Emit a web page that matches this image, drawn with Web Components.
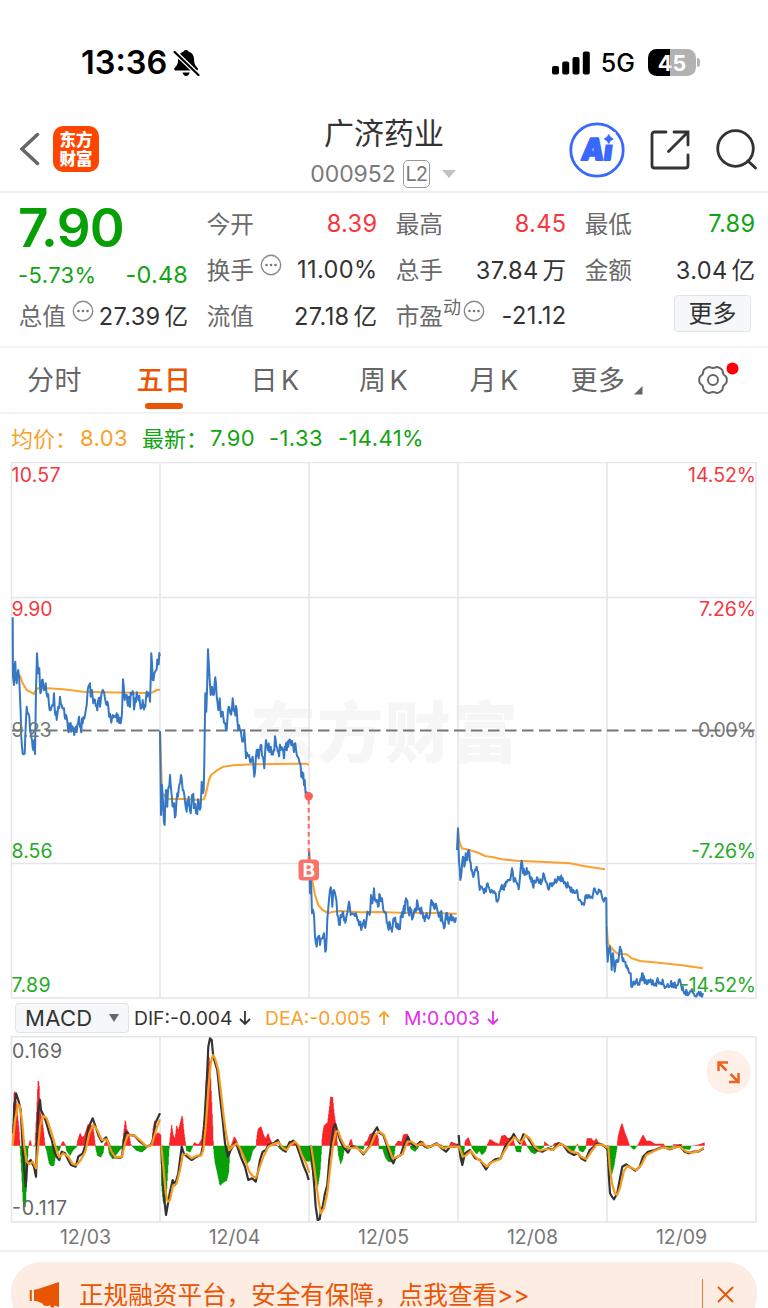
<!DOCTYPE html>
<html lang="zh-CN">
<head>
<meta charset="utf-8">
<title>广济药业 000952</title>
<style>
html, body {
    margin: 0;
    padding: 0;
    background: #fff;
}

body {
    width: 768px;
    height: 1308px;
    overflow: hidden;
    font-family: Inter, "Noto Sans CJK SC", sans-serif;
    color: #333;
}
</style>
</head>
<body>
<stock-app></stock-app>

<script>
const define = (name, html, setup) => {
    customElements.define(name, class extends HTMLElement {
        constructor() {
            super();
            this.attachShadow({ mode: "open" });
            this.shadowRoot.innerHTML = html;
        }
        connectedCallback() {
            if (setup) setup(this, this.shadowRoot);
        }
    });
};

define("status-bar", `
<style>
:host {
    display: flex;
    align-items: center;
    height: 100px;
    padding: 25px 68px 0 81px;
    box-sizing: border-box;
    color: #000;
}
.time { font-size: 32.5px; font-weight: 600; letter-spacing: 0; line-height: 40px; }
.bell { margin-left: 6px; margin-top: 1px; }
.signal { margin-left: auto; }
.net { font-size: 25px; font-weight: 500; letter-spacing: 0; margin: 0 13px 0 11px; }
.battery {
    width: 48px;
    height: 27px;
    border-radius: 8.5px;
    background: linear-gradient(90deg, #000 22px, #b2b2b2 22px);
    color: #fff;
    font-size: 21.5px;
    font-weight: 700;
    line-height: 28px;
    text-align: center;
}
.cap { width: 3px; height: 9px; margin-left: 1px; border-radius: 0 4px 4px 0; background: #b2b2b2; }
svg { display: block; }
</style>
<span class="time">13:36</span>
<svg class="bell" width="27" height="28" viewBox="0 0 27 28">
    <path d="M13 1c-1.700 0-2.300 1-2.700 1.800C6.500 4 5.300 7 5.200 10c-.1 4.500-1.200 6.500-3.600 9-.8.900-.6 2.600 1 2.600h21c1.600 0 1.800-1.700 1-2.600-2.400-2.500-3.500-4.500-3.600-9-.1-3-1.300-6-5.200-7.200C15.300 2 14.700 1 13 1z"/>
    <path d="M9.500 23.500h7.200c-.5 2-1.800 3.400-3.600 3.400s-3.100-1.400-3.600-3.400z"/>
    <path d="M1 2.200L25.500 26" stroke="#fff" stroke-width="4.600"/>
    <path d="M1.600 3L25.500 26" stroke="#000" stroke-width="2.200" stroke-linecap="round"/>
</svg>
<svg class="signal" width="38" height="24" viewBox="0 0 38 24">
    <rect x="0" y="15" width="7" height="8.500" rx="2"/>
    <rect x="10.200" y="10.500" width="7" height="13" rx="2"/>
    <rect x="20.500" y="6" width="7" height="17.500" rx="2"/>
    <rect x="30.800" y="0.500" width="7" height="23" rx="2"/>
</svg>
<span class="net">5G</span>
<div class="battery">45</div>
<div class="cap"></div>
`);

define("nav-bar", `
<style>
:host {
    display: grid;
    grid-template-columns: 1fr 160px 1fr;
    height: 93px;
    padding: 0 11px 0 18px;
    box-sizing: border-box;
    border-bottom: 2px solid #efefef;
}
.left { display: flex; align-items: center; gap: 12px; padding-top: 7px; }
.right { display: flex; align-items: center; justify-content: flex-end; padding-top: 8px; }
.logo {
    width: 46px;
    height: 46px;
    border-radius: 10px;
    background: #ff4600;
    color: #fff;
    font: 900 16.5px/19px "Noto Sans CJK SC", sans-serif;
    text-align: center;
    padding-top: 4px;
    box-sizing: border-box;
}
.title { text-align: center; margin-left: -9px; }
.name { font-size: 30px; line-height: 36px; margin: 15px 0 0 2px; }
.code {
    display: flex;
    align-items: center;
    justify-content: center;
    height: 30px;
    margin-top: 8px;
    font-size: 23px;
    letter-spacing: -0.05px;
    color: #7a7a7a;
}
.level {
    width: 25px;
    height: 26px;
    margin: 0 12px 0 7px;
    border: 1.500px solid #999;
    border-radius: 5px;
    font-size: 20px;
    line-height: 27px;
    letter-spacing: -1px;
}
.drop { border: 7px solid transparent; border-top: 8px solid #c2c2c2; border-bottom: 0; }
svg { display: block; fill: none; stroke: #333; }
</style>
<div class="left">
    <svg width="23" height="34" viewBox="0 0 23 34"><path d="M19.500 2.500L4 17l15.500 14.500" stroke="#666" stroke-width="3.500" stroke-linecap="round"/></svg>
    <div class="logo">东方<br>财富</div>
</div>
<div class="title">
    <div class="name">广济药业</div>
    <div class="code">000952<span class="level">L2</span><span class="drop"></span></div>
</div>
<div class="right">
    <svg width="56" height="56" viewBox="0 0 56 56">
        <circle cx="28" cy="28" r="26.200" stroke="#3968ff" stroke-width="2.800"/>
        <g transform="translate(11.500 38) skewX(-7)">
            <text font-size="30" font-weight="900" fill="#3968ff" stroke="#3968ff" stroke-width="1.800" stroke-linejoin="round" textLength="31" lengthAdjust="spacingAndGlyphs">Ai</text>
        </g>
        <path d="M34.500 10h12v12.500h-12z" fill="#fff" stroke="none"/>
        <path d="M39.700 12.500q1.300 3.200 4.500 4.500-3.200 1.300-4.500 4.500-1.300-3.200-4.500-4.500 3.200-1.300 4.500-4.500z" fill="#3968ff" stroke="#3968ff" stroke-width="0.800"/>
    </svg>
    <svg width="42" height="42" viewBox="0 0 42 42" stroke-width="2.800" stroke-linecap="round" style="margin-left:24px">
        <path d="M17 3H5.500Q3 3 3 5.500v31Q3 39 5.500 39h31q2.500 0 2.500-2.500V26M25 3h14v13M38.500 3.500L19.500 22.500"/>
    </svg>
    <svg width="42" height="42" viewBox="0 0 42 42" stroke-width="2.800" stroke-linecap="round" style="margin-left:24px">
        <circle cx="20.500" cy="19.500" r="17.800"/><path d="M33 32l7.500 7"/>
    </svg>
</div>
`);

// label on the left, value on the right, optional info dot between them
define("quote-cell", `
<style>
:host { display: flex; align-items: center; height: 46px; font-size: 23.600px; }
.label { color: #6a6a6a; white-space: nowrap; display: flex; align-items: center; padding-left: 0.700px; }
.value { margin: 0 -0.500px 0 auto; white-space: nowrap; letter-spacing: 0.35px; word-spacing: -3px; }
:host([tone="up"]) .value { color: #f8363c; }
:host([tone="down"]) .value { color: #12a412; }
.info { display: none; margin: -9px 0 0 6px; }
:host([info]) .info { display: block; }
:host([mark]) .info { margin-left: 2px; }
.mark { font-size: 18px; line-height: 20px; margin-top: -15px; }
.mark:empty { display: none; }
</style>
<span class="label"><slot name="label"></slot><span class="mark"></span>
<svg class="info" width="22" height="22" viewBox="0 0 22 22">
    <circle cx="11" cy="11" r="9.700" fill="none" stroke="#8a8a8a" stroke-width="1.400"/>
    <circle cx="6.500" cy="11" r="1.300" fill="#777"/><circle cx="11" cy="11" r="1.300" fill="#777"/><circle cx="15.500" cy="11" r="1.300" fill="#777"/>
</svg></span>
<span class="value"><slot></slot></span>
`, (host, root) => {
    root.querySelector(".mark").textContent = host.getAttribute("mark") || "";
});

define("quote-panel", `
<style>
:host {
    display: grid;
    grid-template-columns: 170px 171px 171px 171px;
    grid-template-rows: 46px 46px 46px;
    column-gap: 18px;
    height: 155px;
    padding: 7px 12px 0 18px;
    box-sizing: border-box;
    border-bottom: 2px solid #f3f3f3;
}
.price { font-size: 53px; font-weight: 600; line-height: 57px; letter-spacing: -0.8px; color: #06a006; }
.change { display: flex; justify-content: space-between; align-items: center; padding-top: 11px; height: 46px; box-sizing: border-box; font-size: 23.500px; letter-spacing: 0.2px; color: #12a412; }
.change span:first-child { font-size: 22px; letter-spacing: 0.4px; }
.more {
    justify-self: end;
    align-self: center;
    width: 75px;
    height: 35px;
    margin: -3px 4px 0 0;
    border: 1.500px solid #e1e4ea;
    border-radius: 4px;
    background: #f6f7f9;
    font-size: 24px;
    line-height: 35px;
    text-align: center;
}
</style>
<div class="price">7.90</div>
<quote-cell tone="up"><span slot="label">今开</span>8.39</quote-cell>
<quote-cell tone="up"><span slot="label">最高</span>8.45</quote-cell>
<quote-cell tone="down"><span slot="label">最低</span>7.89</quote-cell>
<div class="change"><span>-5.73%</span><span>-0.48</span></div>
<quote-cell info><span slot="label">换手</span>11.00%</quote-cell>
<quote-cell><span slot="label">总手</span>37.84 万</quote-cell>
<quote-cell><span slot="label">金额</span>3.04 亿</quote-cell>
<quote-cell info><span slot="label">总值</span>27.39 亿</quote-cell>
<quote-cell><span slot="label">流值</span>27.18 亿</quote-cell>
<quote-cell info mark="动"><span slot="label">市盈</span>-21.12</quote-cell>
<div class="more">更多</div>
`);

define("period-tabs", `
<style>
:host {
    display: grid;
    grid-template-columns: 109px 110px 112px 105px 116px 91px 1fr;
    height: 66px;
    box-sizing: border-box;
    border-bottom: 2px solid #f1f1f1;
    font-size: 27px;
    color: #666;
}
.tab { display: flex; flex-direction: column; align-items: center; padding-top: 13px; white-space: pre; line-height: 40px; letter-spacing: 0.5px; }
.tab.on { color: #ea5504; font-weight: 500; }
.tab.on::after { content: ""; width: 38px; height: 6px; margin-top: 2px; border-radius: 3px; background: #ea5504; }
.k { letter-spacing: 3.500px; padding-left: 3px; }
.more { flex-direction: row; align-items: flex-start; justify-content: center; padding-left: 18px; }
.more svg { margin: 25px 0 0 8px; }
.gear { display: block; margin: 13px 0 0 52px; }
</style>
<div class="tab">分时</div>
<div class="tab on">五日</div>
<div class="tab k">日K</div>
<div class="tab k">周K</div>
<div class="tab k">月K</div>
<div class="tab more">更多<svg width="9" height="9" viewBox="0 0 9 9"><path d="M8.500 0v8.500H0z" fill="#666"/></svg></div>
<svg class="gear" width="46" height="38" viewBox="0 0 46 38">
    <path class="rim" fill="none" stroke="#666" stroke-width="2"/>
    <circle cx="18" cy="19" r="5" fill="none" stroke="#666" stroke-width="2"/>
    <circle cx="37.500" cy="7.500" r="6" fill="#f00"/>
</svg>
`, (host, root) => {
    // six soft lobes
    const points = [];
    for (let a = 0; a < 360; a += 4) {
        const t = a * Math.PI / 180;
        const r = 13.1 + 0.95 * Math.cos(6 * t) - 0.25 * Math.cos(12 * t);
        points.push((18 + r * Math.cos(t)).toFixed(2) + " " + (19 + r * Math.sin(t)).toFixed(2));
    }
    root.querySelector(".rim").setAttribute("d", "M" + points.join("L") + "Z");
});

define("price-legend", `
<style>
:host {
    display: grid;
    grid-template-columns: 69px 62px 68px 59px 69px auto;
    align-items: center;
    justify-content: start;
    height: 48px;
    padding-left: 11px;
    font-size: 22px;
    letter-spacing: 0.4px;
    white-space: nowrap;
    color: #12a412;
}
.avg { color: #fb9f2a; }
.name { letter-spacing: 0; margin-top: -3px; }
</style>
<span class="avg name">均价：</span><span class="avg">8.03</span>
<span class="name">最新：</span><span>7.90</span><span>-1.33</span><span>-14.41%</span>
`);

// Series are lists of "x,y" in thirds of a pixel, counted from an origin.
const parse = (text, x, y) => text.trim().split(/\s+/).map(p => {
    const [a, b] = p.split(",").map(Number);
    return [x + a / 3, y + b / 3];
});
const toPath = pts => "M" + pts.map(p => p[0].toFixed(1) + " " + p[1].toFixed(1)).join("L");

let seed = 7;
const random = () => {
    seed = (seed * 16807) % 2147483647;
    return seed / 2147483647 - 0.5;
};

// fills the gaps between ticks with minute noise
const roughen = (pts, amount) => {
    const out = [];
    pts.forEach((p, i) => {
        out.push(p);
        const q = pts[i + 1];
        if (!q) return;
        const steps = Math.max(1, Math.round((q[0] - p[0]) / 0.7));
        for (let s = 1; s < steps; s++) {
            const k = s / steps;
            out.push([p[0] + (q[0] - p[0]) * k, p[1] + (q[1] - p[1]) * k + random() * amount]);
        }
    });
    return out;
};

const PRICE = [
    [0, 590, 15, `38,82 39,260 42,285 46,215 50,280 55,240 60,320 62,370 64,440 66,470 70,492 74,490 76,440 80,350 85,370 88,380
    92,430 96,450 100,480 103,450 105,492 108,300 111,190 115,250 118,235 121,310 126,270 132,300 137,280 142,320 147,345
    152,360 157,345 162,310 166,375 170,390 175,350 180,320 185,345 192,355 198,375 204,415 210,405 214,425 218,410 223,435
    228,410 234,400 237,380 242,415 248,400 255,375 260,345 263,300 268,285 274,310 280,340 285,330 290,350 296,325 300,350
    308,300 314,320 320,345 325,350 332,385 338,375 344,380 350,370 356,385 362,400 366,370 369,268 374,330 380,315 388,345
    396,310 404,345 412,315 420,340 428,330 434,345 442,320 450,335 454,190 458,270 463,250 468,240 474,210 480,197`],
    [150, 630, 13, `30,303 33,555 36,465 40,540 44,585 48,480 52,530 56,470 60,435 65,495 70,530 77,555 82,490 88,465 93,435
    98,480 105,515 110,545 116,500 122,550 128,495 134,530 140,548 146,515 152,530 155,455 161,480 163,400 166,190 169,245
    174,58 179,150 182,195 186,170 190,195 196,142 200,200 205,240 209,205 213,260 218,245 224,280 230,298 236,230 241,250
    248,205 254,240 260,240 265,300 272,300 277,335 283,300 288,385 293,375 300,395 308,380 313,440 320,360 326,385 332,345
    338,380 343,415 348,330 354,360 362,350 367,365 377,330 385,365 392,360 402,385 408,340 415,350 422,335 430,350 436,340
    443,380 449,400 454,440 460,430 466,480 472,490`],
    [300, 780, 12, `27,215 30,340 33,300 36,400 42,405 45,470 50,500 55,470 60,495 65,475 72,460 76,515 80,470 84,395 88,350 92,322
    97,380 102,330 107,350 112,405 117,435 122,405 128,395 134,415 140,405 147,365 152,405 160,400 168,400 175,420 181,425
    186,440 192,420 198,430 204,400 209,405 213,345 217,370 222,325 228,365 234,380 240,345 246,355 252,395 258,400 264,440
    270,430 276,455 282,415 290,430 298,445 304,410 310,390 314,400 318,355 324,390 332,395 340,410 347,395 353,370 358,385
    366,400 372,410 380,400 388,410 396,365 402,385 410,380 418,405 426,410 432,445 438,400 444,420 452,405 460,412 468,412`],
    [440, 810, 8, `51,120 54,55 57,155 61,210 65,180 69,140 73,170 77,130 82,150 86,120 90,155 96,180 102,195 108,180 114,185
    119,240 125,230 132,250 138,245 143,220 149,240 155,240 161,245 167,250 172,275 178,245 185,225 192,240 198,215 205,210
    211,210 216,175 221,215 228,215 236,238 241,190 245,152 249,190 256,185 264,185 272,200 278,225 285,215 295,212 305,215
    310,190 317,215 324,235 330,220 338,220 345,208 356,205 368,205 376,220 385,230 392,245 400,240 410,240 416,270 424,275
    432,285 438,255 446,262 455,260 464,235 470,250 480,245 487,265 499,267 500,400 503,455 507,415 511,420 515,480 519,430
    524,485 530,450 535,455 540,410 546,440 552,455 558,470 566,485 572,490 574,530 580,515 588,515 596,520 602,505 608,490
    614,520 625,510 640,520 655,515 670,520 685,530 700,520 712,525 720,510 726,540 735,545 745,555 752,545 760,550 768,560
    776,545 790,550`]
];

const AVERAGE = [
    [0, 590, `38,260 60,257 68,280 80,300 103,312 108,298 120,293 190,298 250,305 310,307 440,309 458,307 470,300 480,299`],
    [150, 630, `30,303 36,490 55,507 110,507 145,510 162,508 168,488 177,450 183,435 200,422 220,410 250,406 310,403 440,401 468,401 476,404`],
    [300, 780, `27,205 32,270 38,310 45,345 55,375 68,390 84,399 100,395 120,393 180,397 240,396 300,398 400,399 470,401`],
    [440, 810, `54,60 58,95 66,115 85,119 115,128 135,138 160,142 185,148 230,152 300,155 390,160 430,168 495,178`],
    [440, 810, `500,350 504,400 512,412 525,425 535,432 560,433 575,445 600,453 640,457 720,465 789,475`]
];

define("price-chart", `
<style>
:host { display: block; height: 537px; }
svg { display: block; }
.grid { fill: none; stroke: #e4e5ed; stroke-width: 1.500; }
.line { fill: none; stroke: #3577c2; stroke-width: 2; stroke-linejoin: round; }
.avg { fill: none; stroke: #faa22f; stroke-width: 2.100; stroke-linejoin: round; }
text { font-size: 19.500px; }
.up { fill: #f5383e; }
.down { fill: #25ab25; }
.flat { fill: #777; }
.end { text-anchor: end; }
.mark { font: 900 66px "Noto Sans CJK SC", sans-serif; fill: #f6f6f6; }
</style>
<svg width="768" height="537" viewBox="0 462 768 537">
    <text class="mark" x="250" y="757" textLength="268">东方财富</text>
    <path class="grid" d="M11.500 462.500H756V998H11.500zM11.500 597.500H756M11.500 863.500H756M160 462V998M309 462V998M458 462V998M607 462V998"/>
    <path d="M12 730.500H756" stroke="#777" stroke-width="2.100" stroke-dasharray="11.500 5.500" fill="none"/>
    <g class="series"></g>
    <path d="M308.700 800V860" stroke="#fb6a60" stroke-width="2" stroke-dasharray="4.500 3.500"/>
    <circle cx="308.700" cy="796.300" r="4.200" fill="#fb6259"/>
    <rect x="298.500" y="859.500" width="20.500" height="21" rx="4" fill="#fb7368"/>
    <text x="308.800" y="876.500" text-anchor="middle" fill="#fff" style="font-size:19px;font-weight:700">B</text>
    <text class="up" x="11.500" y="481.500" textLength="49">10.57</text>
    <text class="up" x="11.500" y="615.500" textLength="41">9.90</text>
    <text class="flat" x="11.500" y="737" textLength="40">9.23</text>
    <text class="down" x="11.500" y="858" textLength="41">8.56</text>
    <text class="down" x="11.500" y="992" textLength="39">7.89</text>
    <text class="up end" x="756" y="481.500" textLength="68">14.52%</text>
    <text class="up end" x="756" y="615.500" textLength="57">7.26%</text>
    <text class="flat end" x="756" y="737" textLength="58">0.00%</text>
    <text class="down end" x="756" y="858" textLength="65">-7.26%</text>
    <text class="down end" x="756" y="992" textLength="76">-14.52%</text>
</svg>
`, (host, root) => {
    const avg = AVERAGE.map(([x, y, t]) => `<path class="avg" d="${toPath(parse(t, x, y))}"/>`);
    const line = PRICE.map(([x, y, n, t]) => `<path class="line" d="${toPath(roughen(parse(t, x, y), n))}"/>`);
    root.querySelector(".series").innerHTML = avg.join("") + line.join("");
});

// signed bar heights around the zero line
const HIST = [
    [0, `38,0 41,130 43,168 48,140 52,100 57,50 60,0 64,-60 70,-180 76,-185 80,-110 84,-10 87,5 91,18 95,0 105,-3 108,60 111,120
    114,195 117,190 121,100 126,80 131,40 135,0 140,-15 148,-55 155,-62 162,-60 168,-20 178,-15 184,5 189,14 196,3 200,-15
    210,-30 218,-15 230,-3 233,15 240,38 247,25 253,30 258,45 264,65 270,60 278,62 282,35 286,0 292,-30 302,-35 310,-20 313,5
    320,15 324,0 328,-25 338,-40 350,-25 360,-12 368,-5 370,30 376,80 380,50 386,40 392,5 398,-3 410,-15 425,-20 435,-12
    445,0 455,5 459,50 464,75 468,30 474,40 482,33 483,0 484,-110 489,-165 494,-180 500,-130 505,-50 508,0 511,30 515,62
    520,30 525,20 530,60 535,45 541,70 547,92 552,40 556,10 560,-15 570,-20 577,-5 583,10 590,5 597,5 605,20 610,60 615,90
    619,210 624,225 628,270 632,200 638,60 640,0 645,-50 652,-80 660,-120 670,-110 680,-105 686,-80 690,-10 695,5 703,28
    710,15 718,-15 728,-30 740,-55 750,-45`],
    [250, `0,-45 8,-15 18,-3 20,20 24,50 33,58 40,35 47,20 54,38 60,20 68,5 80,3 88,-8 100,-18 110,-12 118,15 130,12 140,3
    148,-15 155,-30 165,-45 175,-48 181,-45 186,-70 193,-110 203,-125 210,-80 215,-5 217,30 222,60 228,65 233,70 238,110
    242,147 248,145 252,100 258,60 262,5 266,-30 272,-55 278,-40 283,-10 293,-12 300,15 304,20 308,3 325,-6 340,-12 345,10
    352,15 360,35 372,40 384,30 387,-10 398,-10 406,-35 415,-48 425,-50 432,-30 437,5 445,15 455,12 460,33 472,36 478,15
    482,-8 495,-18 505,-5 512,15 520,12 530,-10 545,-5 560,5 575,3 585,-8 598,0 604,12 612,8 625,5 630,-40 637,-60 642,-15
    646,15 655,25 662,5 668,-10 680,-25 688,-15 696,-28 706,-18 713,5 720,20 735,10 748,5 755,30 765,32 774,22`],
    [508, `0,22 8,25 15,20 21,0 25,-18 38,-20 42,8 48,20 54,5 58,-3 70,-20 80,-25 95,-12 108,-5 110,12 118,5 130,-5 140,8
    155,10 170,-5 185,-15 196,-20 204,-3 209,6 214,-15 225,-20 233,-8 237,22 250,22 258,12 265,22 272,5 285,3 295,-5
    300,-60 308,-100 318,-60 327,-5 330,25 336,50 342,68 350,40 358,20 365,0 378,-12 388,0 395,12 405,33 415,15 425,15
    440,6 465,6 475,-4 490,-10 497,4 520,5 527,-10 545,-12 550,0 570,3 580,6 590,10`]
];

const DIF = [
    [[0, `40,400 43,320 48,280 55,300 62,330 67,420 72,500 77,560 82,490 92,480 96,490 102,500 108,530 110,450 115,330 120,300
    123,330 130,345 138,365 148,400 155,420 163,455 170,470 178,480 185,455 195,460 205,480 213,495 227,500 235,470 248,460
    258,430 265,385 278,355 285,375 295,405 305,425 318,412 330,440 342,472 360,473 366,470 371,420 378,395 388,405 404,407
    420,425 440,440 452,435 459,420 466,370 480,340`]],
    [[0, `484,437 488,520 492,590 498,645 504,610 510,575 518,540 525,555 535,520 545,440 552,462 562,470 575,480 590,470
    603,465 608,440 614,350 621,230 625,140 630,115 635,120 640,170 652,210 660,290 668,360 675,430 684,470 692,450 705,428
    712,440 722,470 735,500 745,540 756,535`],
    [250, `17,545 24,515 30,480 38,455 48,450 55,435 70,430 83,420 95,445 107,455 117,430 130,422 138,430 150,465 160,495 170,520 176,540`]],
    [[250, `181,437 188,500 193,560 197,620 203,660 209,658 213,630 218,620 225,580 232,555 238,480 244,430 250,385 256,372
    264,400 270,420 280,440 294,458 303,440 315,440 325,445 340,463 350,450 360,435 370,400 381,382 388,398 400,405 410,435
    420,470 430,490 436,475 452,465 460,440 474,410 482,430 495,440 511,425 525,440 540,440 560,430 575,445 588,455 600,440
    615,440 624,435`]],
    [[250, `626,405 630,460 637,495 645,460 660,450 675,475 690,480 708,508 720,490 735,478 752,475 765,440 778,425`],
    [508, `17,402 25,415 36,430 46,403 58,410 70,430 85,450 103,455 120,445 135,450 150,430 165,435 180,455 198,465 210,460
    220,475 232,482 245,450 258,440 268,430 280,432 296,445 299,440 302,520 306,580 312,590 318,598 328,580 335,540 343,500
    355,493 368,503 382,512 395,500 405,470 420,455 440,450 465,440 485,448 515,437 530,455 542,460 555,455 570,455 587,445`]]
];

const DEA = [
    [[0, `38,437 45,360 54,313 60,320 67,370 73,440 80,485 88,492 98,485 108,505 112,470 120,380 128,348 140,355 155,400
    168,445 178,472 190,460 205,470 218,492 230,495 242,480 256,455 268,400 280,375 292,390 305,420 320,418 335,455 345,472
    366,470 375,430 383,405 405,407 425,425 440,440 455,435 468,390 480,358`]],
    [[0, `484,437 490,500 497,580 503,605 510,600 518,560 530,550 540,510 548,465 560,462 575,475 590,467 603,467 610,450
    618,370 625,270 632,190 638,165 645,175 655,210 662,270 670,340 678,400 688,450 697,440 710,430 720,445 735,480 748,515 760,530`],
    [250, `18,533 28,505 40,470 55,440 70,432 85,427 100,445 110,450 120,435 135,425 145,435 155,465 168,490 178,518`]],
    [[250, `183,437 190,480 200,560 207,610 213,640 222,625 232,580 242,490 250,430 258,395 264,392 272,415 285,440 300,445
    320,442 340,460 360,440 375,405 388,395 402,405 415,440 428,475 440,472 458,462 472,425 485,425 500,437 515,430 535,442
    560,432 580,445 600,440 624,440 628,440 638,470 650,465 662,453 680,475 695,485 710,500 725,487 750,478 765,450 778,430`],
    [508, `20,412 30,420 40,428 52,405 65,415 80,440 95,452 115,447 135,450 155,432 170,438 190,455 205,458 220,470 235,478
    250,455 265,435 282,433 296,442 301,440 305,500 312,550 320,580 328,585 337,560 347,515 357,498 370,503 385,510 400,495
    415,465 440,452 465,442 485,446 515,440 535,455 550,458 570,455 587,443`]]
];

define("macd-bar", `
<style>
:host { display: flex; align-items: center; height: 37px; padding-left: 15px; font-size: 19.300px; white-space: nowrap; }
.pick {
    display: flex;
    align-items: center;
    justify-content: space-between;
    width: 114px;
    height: 30px;
    padding: 0 9px 0 9px;
    box-sizing: border-box;
    border: 1.500px solid #e2e4ea;
    border-radius: 4px;
    background: #f6f7f9;
    font-size: 22px;
    letter-spacing: 0.3px;
}
.pick i { border: 5px solid transparent; border-top: 8px solid #666; border-bottom: 0; }
.row { display: grid; grid-template-columns: 131px 139px auto; margin-left: 5px; }
.row span { display: flex; align-items: center; }
.row svg { margin-left: 7px; fill: none; stroke: currentColor; stroke-width: 1.800; }
.dea { color: #fb9f2a; }
.m { color: #e22ee8; }
</style>
<div class="pick">MACD<i></i></div>
<div class="row">
    <span>DIF:-0.004<svg width="12" height="16" viewBox="0 0 12 16"><path d="M6 1v13M1 9l5 5 5-5"/></svg></span>
    <span class="dea">DEA:-0.005<svg width="12" height="16" viewBox="0 0 12 16"><path d="M6 15V2M1 7l5-5 5 5"/></svg></span>
    <span class="m">M:0.003<svg width="12" height="16" viewBox="0 0 12 16"><path d="M6 1v13M1 9l5 5 5-5"/></svg></span>
</div>
`);

define("macd-chart", `
<style>
:host { display: block; height: 187px; }
svg { display: block; }
.grid { fill: none; stroke: #e4e5ed; stroke-width: 1.500; }
.dif, .dea { fill: none; stroke-linejoin: round; stroke-width: 2.200; }
.dif { stroke: #333; }
.dea { stroke: #f79a1e; }
text { font-size: 19.500px; fill: #666; }
</style>
<svg width="768" height="187" viewBox="0 1036 768 187">
    <path class="grid" d="M11.500 1036.700H756V1222H11.500zM160 1037V1222M309 1037V1222M458 1037V1222M607 1037V1222"/>
    <g class="bars"></g>
    <g class="lines"></g>
    <text x="12" y="1057.500" textLength="50">0.169</text>
    <text x="12" y="1214.500" textLength="55">-0.117</text>
    <circle cx="728.500" cy="1072" r="22" fill="#fef0e8"/>
    <path d="M718.500 1071v-8.500h9.500M719 1063l7.500 7.500M738.500 1073v9H729M738 1081.500l-7.500-7.500" fill="none" stroke="#ea6420" stroke-width="2.500"/>
</svg>
`, (host, root) => {
    const zero = 1145.7;
    const pts = HIST.flatMap(([x, t]) => parse(t, x, 0));
    let red = "", green = "", i = 0;
    for (let x = pts[0][0]; x < pts[pts.length - 1][0]; x += 0.5) {
        while (pts[i + 1][0] < x) i++;
        const [a, b] = [pts[i], pts[i + 1]];
        const h = a[1] + (b[1] - a[1]) * (x - a[0]) / (b[0] - a[0] || 1);
        const bar = `M${x.toFixed(2)} ${zero}v${(-h).toFixed(2)}`;
        if (h > 0) red += bar;
        else green += bar;
    }
    root.querySelector(".bars").innerHTML =
        `<path d="${red}" stroke="#f82428" stroke-width="1.1"/><path d="${green}" stroke="#07a007" stroke-width="1.1"/>`;
    const draw = (set, name) => set.map(parts =>
        `<path class="${name}" d="${toPath(parts.flatMap(([x, t]) => parse(t, x, 1000)))}"/>`).join("");
    root.querySelector(".lines").innerHTML = draw(DIF, "dif") + draw(DEA, "dea");
});

define("date-axis", `
<style>
:host {
    display: grid;
    grid-template-columns: repeat(5, 149px);
    height: 29px;
    padding-left: 11px;
    box-sizing: border-box;
    border-bottom: 2px solid #f0f0f0;
    font-size: 19.500px;
    line-height: 29px;
    text-align: center;
    color: #777;
}
</style>
<span>12/03</span><span>12/04</span><span>12/05</span><span>12/08</span><span>12/09</span>
`);

define("notice-banner", `
<style>
:host {
    display: flex;
    align-items: center;
    height: 64px;
    margin: 10px 11px 0;
    padding: 0 23px 0 18px;
    box-sizing: border-box;
    border-radius: 30px;
    background: #fdece2;
    color: #ea5504;
    font-size: 24.600px;
}
.text { margin: -3px 0 0 19px; white-space: nowrap; }
.rule { width: 1.500px; height: 31px; margin-left: auto; background: #ee7a3c; }
svg { display: block; }
.close { margin-left: 14px; }
</style>
<svg width="31" height="27" viewBox="0 0 31 27">
    <path d="M.8 9h2v11h-2zM5 8.500h2.500L30 1v25l-5-1.500v2h-3l-1-2.500c-1 1.500-7 1.500-7.500-1.500L7.500 20H5z" fill="#ea5504"/>
</svg>
<span class="text"><slot></slot></span>
<span class="rule"></span>
<svg class="close" width="17" height="17" viewBox="0 0 17 17"><path d="M1 1l15 15M16 1L1 16" stroke="#ea5504" stroke-width="1.800"/></svg>
`);

define("stock-app", `
<style>
:host { display: flex; flex-direction: column; width: 768px; height: 1308px; overflow: hidden; background: #fff; }
:host > * { flex: none; }
</style>
<status-bar></status-bar>
<nav-bar></nav-bar>
<quote-panel></quote-panel>
<period-tabs></period-tabs>
<price-legend></price-legend>
<price-chart></price-chart>
<macd-bar></macd-bar>
<macd-chart></macd-chart>
<date-axis></date-axis>
<notice-banner>正规融资平台，安全有保障，点我查看&gt;&gt;</notice-banner>
`);
</script>
</body>
</html>
